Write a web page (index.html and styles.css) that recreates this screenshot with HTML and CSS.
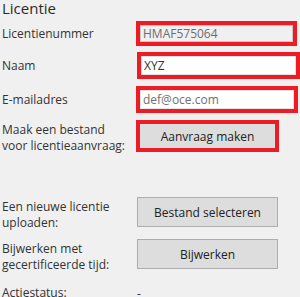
FILE: index.html
```html
<!DOCTYPE html>
<html>
<head>
    <title>Licentie</title>
    <link rel="stylesheet" href="styles.css">
</head>
<body>
    <h1>Licentie</h1>

    <div class="form">
        <div class="row row-1">
            <label class="label">Licentienummer</label>
            <div class="mark mark-1">
                <input class="field field-disabled" type="text" value="HMAF575064" disabled>
            </div>
        </div>

        <div class="row row-2">
            <label class="label">Naam</label>
            <div class="mark mark-2">
                <input class="field" type="text" value="XYZ">
            </div>
        </div>

        <div class="row row-3">
            <label class="label">E-mailadres</label>
            <div class="mark mark-3">
                <input class="field field-light" type="text" value="def@oce.com">
            </div>
        </div>

        <div class="row row-4">
            <label class="label label-top">Maak een bestand voor licentieaanvraag:</label>
            <div class="mark mark-4">
                <button class="btn btn-marked">Aanvraag maken</button>
            </div>
        </div>

        <div class="row row-5">
            <label class="label label-top">Een nieuwe licentie uploaden:</label>
            <button class="btn">Bestand selecteren</button>
        </div>

        <div class="row row-6">
            <label class="label label-top">Bijwerken met gecertificeerde tijd:</label>
            <button class="btn">Bijwerken</button>
        </div>

        <div class="row row-7">
            <span class="label label-top">Actiestatus:</span>
            <span class="status">-</span>
        </div>
    </div>
</body>
</html>
```

FILE: styles.css
```css
body {
    font-family: "Open Sans", "Noto Sans", sans-serif;
    font-size: 12px;
    color: #333;
    background-color: #f0f0f0;
    margin: 0;
    padding: 0 0 0 2px;
    overflow: hidden;
}

h1 {
    font-size: 15px;
    font-weight: 400;
    color: #2b2b2b;
    margin: 0;
    height: 21px;
    line-height: 17px;
}

.row {
    display: grid;
    grid-template-columns: 134px auto;
    align-items: center;
}

.row-1 { height: 25px; margin-bottom: 6px; }
.row-2 { height: 27px; margin-bottom: 7px; }
.row-3 { height: 27px; margin-bottom: 7px; }
.row-4 { height: 32px; margin-bottom: 45px; align-items: start; }
.row-5 { height: 30px; margin-bottom: 12px; align-items: start; }
.row-6 { height: 30px; margin-bottom: 14px; align-items: start; }
.row-7 { align-items: start; }

.label {
    line-height: 16px;
    white-space: normal;
}

.label-top {
    padding-top: 2px;
    width: 130px;
}

.mark {
    border: 4px solid #ed1c24;
    box-sizing: border-box;
    display: flex;
}

.mark-1 { width: 161px; height: 25px; }
.mark-2 { width: 163px; height: 27px; margin-left: 1px; }
.mark-3 { width: 162px; height: 27px; }
.mark-4 { width: 143px; height: 32px; }

.field {
    flex: 1;
    min-width: 0;
    margin: 0;
    padding: 0 2px;
    font-family: inherit;
    font-size: 12px;
    color: #333;
    background-color: #fff;
    border: 1px solid #e3e3e3;
    outline: none;
}

.field-disabled {
    background-color: #f0f0f0;
    border-color: #c8c8c8;
    color: #6d6d6d;
}

.field-light {
    color: #707070;
}

.btn {
    width: 141px;
    height: 30px;
    margin: 0 0 0 1px;
    padding: 0;
    font-family: inherit;
    font-size: 12px;
    color: #222;
    background-color: #dddddd;
    border: 1px solid #adadad;
}

.btn-marked {
    width: auto;
    height: auto;
    flex: 1;
    margin: 0;
    border: none;
}

.status {
    padding-left: 1px;
    padding-top: 2px;
}
```
